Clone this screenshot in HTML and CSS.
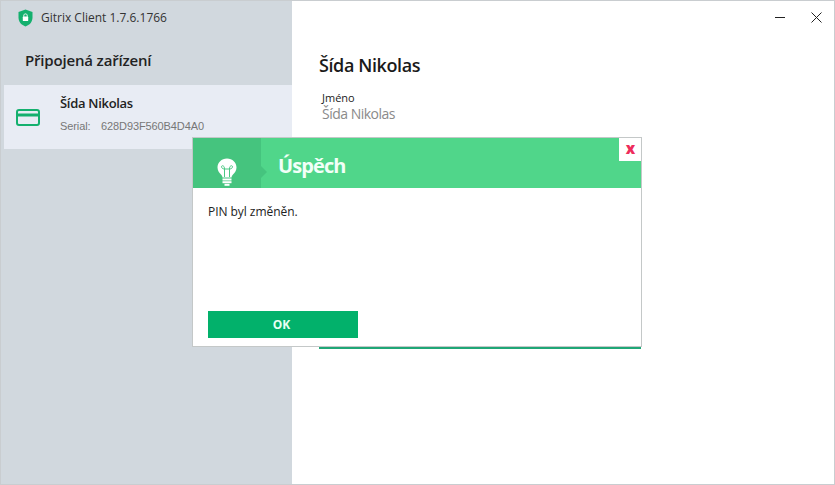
FILE: index.html
```html
<!DOCTYPE html>
<html lang="cs">
<head>
  <meta charset="UTF-8" />
  <title>Gitrix Client</title>
  <link rel="stylesheet" href="styles.css">
</head>
<body>

  <div class="window">
    <div class="sidebar">
      <div class="titlebar">
        <svg class="logo" width="15" height="18" viewBox="0 0 15 18">
          <path d="M7.5 0.5 L14.5 3 V8.5 C14.5 13 11.5 16 7.5 17.5 C3.5 16 0.5 13 0.5 8.5 V3 Z" fill="#14b06e"/>
          <rect x="4.8" y="7.6" width="5.4" height="4.4" rx="0.6" fill="#fff"/>
          <path d="M5.8 7.8 V6.4 C5.8 4.4 9.2 4.4 9.2 6.4 V7.8" fill="none" stroke="#fff" stroke-width="1"/>
        </svg>
        <span class="app-name">Gitrix Client 1.7.6.1766</span>
      </div>
      <h2 class="side-title">Připojená zařízení</h2>
      <div class="device">
        <svg class="card-icon" width="24" height="17" viewBox="0 0 24 17">
          <rect x="1" y="1" width="22" height="15" rx="2" fill="none" stroke="#14b06e" stroke-width="2"/>
          <rect x="1" y="4.5" width="22" height="3" fill="#14b06e"/>
        </svg>
        <div class="device-info">
          <div class="device-name">Šída Nikolas</div>
          <div class="device-serial"><span class="serial-label">Serial:</span>628D93F560B4D4A0</div>
        </div>
      </div>
    </div>

    <div class="main">
      <div class="winbtns">
        <svg width="11" height="11" viewBox="0 0 11 11"><path d="M0 5.5 H10" stroke="#222" stroke-width="1"/></svg>
        <svg width="11" height="11" viewBox="0 0 11 11"><path d="M0.5 0.5 L10.5 10.5 M10.5 0.5 L0.5 10.5" stroke="#222" stroke-width="1"/></svg>
      </div>
      <h1 class="person">Šída Nikolas</h1>
      <div class="field">
        <div class="field-label">Jméno</div>
        <div class="field-value">Šída Nikolas</div>
      </div>
      <div class="main-button"></div>
    </div>
  </div>

  <!-- dialog -->
  <div class="dialog">
    <div class="dialog-head">
      <div class="dialog-icon">
        <svg width="20" height="28" viewBox="0 0 20 28">
          <path d="M10 0.5 C4.5 0.5 0.5 4.5 0.5 9.5 C0.5 13 2.5 15 4 16.5 C5 17.5 5.5 18.5 5.5 19.5 H14.5 C14.5 18.5 15 17.5 16 16.5 C17.5 15 19.5 13 19.5 9.5 C19.5 4.5 15.5 0.5 10 0.5 Z" fill="#fff"/>
          <path d="M7.5 19 V11 C5.5 11 4.5 9.8 4.5 8.7 C4.5 7.2 7.5 7 7.5 11 H12.5 C12.5 7 15.5 7.2 15.5 8.7 C15.5 9.8 14.5 11 12.5 11 V19" fill="none" stroke="#4cc884" stroke-width="1"/>
          <rect x="5.5" y="20.5" width="9" height="2" fill="#fff"/>
          <rect x="5.5" y="23.2" width="9" height="2" fill="#fff"/>
          <rect x="7.5" y="25.8" width="5" height="2" fill="#fff"/>
        </svg>
      </div>
      <div class="dialog-title">Úspěch</div>
      <div class="dialog-close">x</div>
    </div>
    <div class="dialog-body">
      <p class="dialog-text">PIN byl změněn.</p>
      <button class="ok-btn">OK</button>
    </div>
  </div>

</body>
</html>
```

FILE: styles.css
```css
html, body {
  margin: 0;
  height: 100%;
}

body {
  font-family: 'Open Sans', 'Noto Sans', sans-serif;
  background: #fff;
  overflow: hidden;
}

.window {
  display: flex;
  height: 485px;
  box-sizing: border-box;
  border: 1px solid #c9cdd0;
}

/* levy panel */
.sidebar {
  width: 291px;
  flex-shrink: 0;
  background: #d1d8de;
  padding-left: 3px;
  box-sizing: border-box;
}

.titlebar {
  display: flex;
  align-items: center;
  height: 33px;
  padding-left: 14px;
}

.logo {
  margin-right: 8px;
}

.app-name {
  font-size: 12px;
  color: #333;
}

.side-title {
  margin: 0;
  padding: 16px 0 14px 21px;
  font-size: 15px;
  line-height: 21px;
  font-weight: 600;
  letter-spacing: -0.17px;
  color: #222;
}

.device {
  display: flex;
  align-items: center;
  height: 64px;
  background: #e8ecf4;
}

.card-icon {
  margin-left: 12px;
  margin-right: 20px;
}

.device-info {
  padding-bottom: 7px;
}

.device-name {
  font-size: 13px;
  font-weight: 600;
  line-height: 18px;
  letter-spacing: -0.3px;
  color: #222;
}

.device-serial {
  margin-top: 7px;
  font-family: 'Liberation Sans', sans-serif;
  font-size: 11px;
  line-height: 14px;
  letter-spacing: -0.1px;
  color: #777;
}

.serial-label {
  display: inline-block;
  width: 41px;
}

/* hlavni cast */
.main {
  flex: 1;
  position: relative;
  padding-left: 27px;
}

.winbtns {
  position: absolute;
  top: 11px;
  right: 12px;
  display: flex;
  gap: 25px;
}

.person {
  margin: 0;
  padding-top: 51px;
  font-size: 18px;
  line-height: 27px;
  font-weight: 600;
  letter-spacing: -0.4px;
  color: #1a1a1a;
}

.field {
  margin-top: 11px;
  padding-left: 3px;
}

.field-label {
  font-size: 11px;
  line-height: 15px;
  color: #222;
}

.field-value {
  font-size: 14px;
  line-height: 17px;
  letter-spacing: -0.5px;
  color: #8a8a8a;
}

.main-button {
  margin-top: 224px;
  width: 322px;
  height: 3px;
  background: #1fa777;
}

/* dialog */
.dialog {
  position: absolute;
  left: 192px;
  top: 137px;
  width: 448px;
  height: 208px;
  background: #fff;
  border: 1px solid #c4c8c8;
  display: flex;
  flex-direction: column;
}

.dialog-head {
  position: relative;
  display: flex;
  height: 50px;
  background: #50d68a;
}

.dialog-icon {
  position: relative;
  width: 68px;
  background: #45c47e;
  display: flex;
  justify-content: center;
  align-items: flex-end;
  padding-bottom: 2px;
  box-sizing: border-box;
}

.dialog-icon::after {
  content: "";
  position: absolute;
  right: -6px;
  top: 28px;
  border-left: 6px solid #45c47e;
  border-top: 6px solid transparent;
  border-bottom: 6px solid transparent;
}

.dialog-title {
  margin-left: 17px;
  font-size: 20px;
  line-height: 56px;
  height: 50px;
  font-weight: 700;
  letter-spacing: -0.9px;
  color: #f2fff8;
}

.dialog-close {
  position: absolute;
  top: 0;
  right: 0;
  width: 21px;
  height: 23px;
  padding-left: 1px;
  background: #fff;
  text-align: center;
  font-size: 15px;
  line-height: 21px;
  font-weight: 800;
  color: #ee2d5c;
}

.dialog-body {
  flex: 1;
  display: flex;
  flex-direction: column;
  padding: 0 15px 8px;
}

.dialog-text {
  margin: 16px 0 0;
  font-size: 12px;
  line-height: 16px;
  letter-spacing: -0.05px;
  color: #222;
}

.ok-btn {
  margin-top: auto;
  width: 150px;
  height: 27px;
  padding: 0 3px 0 0;
  border: none;
  background: #02b16b;
  color: #e8fff4;
  font-family: inherit;
  font-size: 12px;
  font-weight: 700;
}
```
